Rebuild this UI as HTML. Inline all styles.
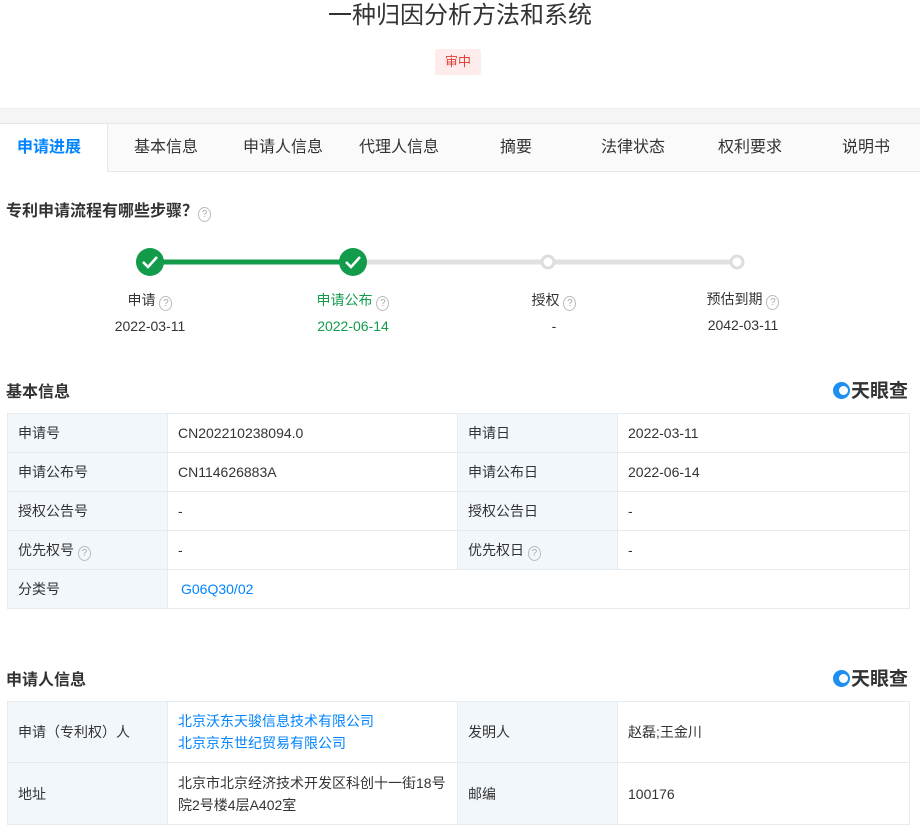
<!DOCTYPE html>
<html><head><meta charset="utf-8"><style>
*{margin:0;padding:0;box-sizing:border-box}
body{width:920px;height:823px;overflow:hidden;background:#fff;font-family:"Liberation Sans","Noto Sans CJK SC",sans-serif;color:#333;font-size:14px;position:relative}
.abs{position:absolute}
.title{top:1px;left:0;width:920px;text-align:center;font-size:24px;color:#333;line-height:30px}
.badge{left:435px;top:49px;width:46px;height:26px;background:#fdeceb;color:#e0403a;font-size:13px;line-height:26px;text-align:center;border-radius:2px}
.band{top:108px;left:0;width:920px;height:15px;background:#f5f5f5;border-top:1px solid #ececec}
.tabs{top:123px;left:0;width:920px;height:49px;background:#fafafa;border-top:1px solid #e8e8e8;border-bottom:1px solid #e8e8e8}
.tab{position:absolute;top:0;height:47px;line-height:47px;font-size:16px;color:#333;text-align:center}
.h{font-size:16px;font-weight:bold;color:#333}
.q{display:inline-block;width:13px;height:15px;border:1px solid #bbb;border-radius:50%;font-size:10px;line-height:13px;text-align:center;color:#aaa;vertical-align:-1px;font-weight:normal}
table{position:absolute;left:7px;width:903px;border-collapse:collapse;font-size:14px}
td{border:1px solid #e6ebf0;padding:0 10px;height:39px}
td.l{background:#f2f7fc;width:160px}
td.v{width:290px}
a{color:#0084ff;text-decoration:none}
.logo{font-size:19px;font-weight:bold;color:#333}
.lg{display:inline-block;width:17px;height:17px;border-radius:50%;background:#1f8ef1;vertical-align:-2px;margin-right:1px;position:relative}
.lg:after{content:"";position:absolute;left:6px;top:4px;width:9px;height:9px;border-radius:50%;background:#fff}
.st{font-size:14px;text-align:center;width:130px}
</style></head><body>
<div class="abs title">一种归因分析方法和系统</div>
<div class="abs badge">审中</div>
<div class="abs band"></div>
<div class="abs tabs">
<div class="tab" style="left:0;width:98px;background:#fff;color:#0084ff;font-weight:bold;height:48px">申请进展</div>
<div class="abs" style="left:98px;top:0;width:10px;height:48px;background:#fff;border-right:1px solid #e8e8e8"></div>
<div class="tab" style="left:108px;width:116px">基本信息</div>
<div class="tab" style="left:225px;width:116px">申请人信息</div>
<div class="tab" style="left:341px;width:116px">代理人信息</div>
<div class="tab" style="left:458px;width:116px">摘要</div>
<div class="tab" style="left:575px;width:116px">法律状态</div>
<div class="tab" style="left:692px;width:116px">权利要求</div>
<div class="tab" style="left:808px;width:116px">说明书</div>
</div>
<div class="abs h" style="left:6px;top:197px">专利申请流程有哪些步骤？<span class="q">?</span></div>
<svg class="abs" style="left:0;top:240px" width="920" height="45">
<line x1="150" y1="22" x2="353" y2="22" stroke="#119b4b" stroke-width="5"/>
<line x1="353" y1="22" x2="737" y2="22" stroke="#e0e0e0" stroke-width="5"/>
<circle cx="150" cy="22" r="14" fill="#119b4b"/><path d="M143 22l5 5 9-10" stroke="#fff" stroke-width="2.5" fill="none"/>
<circle cx="353" cy="22" r="14" fill="#119b4b"/><path d="M346 22l5 5 9-10" stroke="#fff" stroke-width="2.5" fill="none"/>
<circle cx="548" cy="22" r="6" fill="#fff" stroke="#ddd" stroke-width="3"/>
<circle cx="737" cy="22" r="6" fill="#fff" stroke="#ddd" stroke-width="3"/>
</svg>
<div class="abs st" style="left:85px;top:290px">申请 <span class="q">?</span><br><span style="line-height:30px">2022-03-11</span></div>
<div class="abs st" style="left:288px;top:290px;color:#119b4b">申请公布 <span class="q">?</span><br><span style="line-height:30px">2022-06-14</span></div>
<div class="abs st" style="left:489px;top:290px">授权 <span class="q">?</span><br><span style="line-height:30px">-</span></div>
<div class="abs st" style="left:678px;top:289px">预估到期 <span class="q">?</span><br><span style="line-height:30px">2042-03-11</span></div>
<div class="abs h" style="left:6px;top:378px">基本信息</div>
<div class="abs logo" style="left:833px;top:376px"><span class="lg"></span>天眼查</div>
<table style="top:413px">
<tr><td class="l">申请号</td><td class="v">CN202210238094.0</td><td class="l">申请日</td><td>2022-03-11</td></tr>
<tr><td class="l">申请公布号</td><td class="v">CN114626883A</td><td class="l">申请公布日</td><td>2022-06-14</td></tr>
<tr><td class="l">授权公告号</td><td class="v">-</td><td class="l">授权公告日</td><td>-</td></tr>
<tr><td class="l">优先权号 <span class="q">?</span></td><td class="v">-</td><td class="l">优先权日 <span class="q">?</span></td><td>-</td></tr>
<tr><td class="l">分类号</td><td colspan="3"><a style="margin-left:3px">G06Q30/02</a></td></tr>
</table>
<div class="abs h" style="left:6px;top:666px">申请人信息</div>
<div class="abs logo" style="left:833px;top:664px"><span class="lg"></span>天眼查</div>
<table style="top:701px">
<tr><td class="l" style="height:61px">申请（专利权）人</td><td class="v" style="line-height:22px"><a>北京沃东天骏信息技术有限公司</a><br><a>北京京东世纪贸易有限公司</a></td><td class="l">发明人</td><td>赵磊;王金川</td></tr>
<tr><td class="l" style="height:62px">地址</td><td class="v" style="line-height:22px">北京市北京经济技术开发区科创十一街18号院2号楼4层A402室</td><td class="l">邮编</td><td>100176</td></tr>
</table>
</body></html>
